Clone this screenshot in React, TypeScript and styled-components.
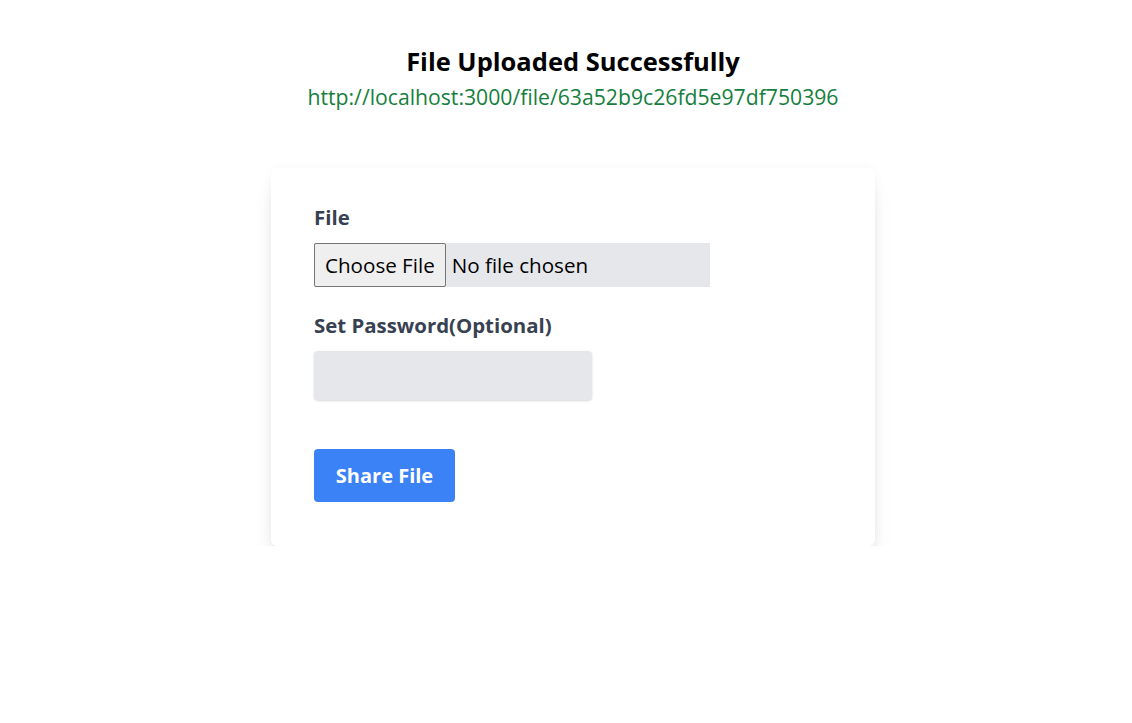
import React from 'react';
import styled, { createGlobalStyle } from 'styled-components';

const GlobalStyle = createGlobalStyle`
  body {
    margin: 0;
    background: #ffffff;
    font-family: "Open Sans", "Noto Sans", sans-serif;
  }
`;

const Page = styled.div`
  display: flex;
  flex-direction: column;
  align-items: center;
  padding: 45px 0 0 14px;
`;

const Title = styled.h2`
  margin: 0;
  font-size: 25.5px;
  line-height: 32px;
  font-weight: 700;
  color: #000000;
`;

const FileLink = styled.p`
  margin: 6px 0 0;
  font-size: 21.2px;
  line-height: 28px;
  color: #15803d;
`;

const Card = styled.form`
  margin-top: 57px;
  width: 604px;
  box-sizing: border-box;
  padding: 35px 43px 44px;
  background: #ffffff;
  border-radius: 6px;
  box-shadow: 0 20px 25px -5px rgba(0, 0, 0, 0.1), 0 8px 10px -6px rgba(0, 0, 0, 0.1),
    0 0 12px rgba(0, 0, 0, 0.04);
`;

const Field = styled.div<{ $gap?: number }>`
  display: flex;
  flex-direction: column;
  align-items: flex-start;
  margin-bottom: ${(p) => p.$gap ?? 24}px;
`;

const Label = styled.label`
  font-size: 20.4px;
  line-height: 28px;
  font-weight: 700;
  color: #374151;
  margin-bottom: 12px;
`;

const FileInput = styled.input`
  width: 396px;
  height: 44px;
  box-sizing: border-box;
  background: #e5e7eb;
  font-family: inherit;
  font-size: 20.6px;
  color: #000000;

  &::file-selector-button {
    height: 44px;
    margin-right: 6px;
    padding: 0 10px;
    font-family: inherit;
    font-size: 20.6px;
    background: #efefef;
    border: 1px solid #767676;
    border-radius: 2px;
    color: #000000;
  }
`;

const PasswordInput = styled.input`
  width: 278px;
  height: 49px;
  box-sizing: border-box;
  border: none;
  border-radius: 4px;
  background: #e5e7eb;
  box-shadow: 0 1px 3px rgba(0, 0, 0, 0.1), 0 1px 2px rgba(0, 0, 0, 0.06);
  padding: 0 12px;
  font-size: 18px;
  outline: none;
`;

const ShareButton = styled.button`
  width: 141px;
  height: 53px;
  border: none;
  border-radius: 4px;
  background: #3b82f6;
  color: #ffffff;
  font-family: inherit;
  font-size: 20px;
  font-weight: 700;
  cursor: pointer;
`;

const App: React.FC = () => {
  return (
    <>
      <GlobalStyle />
      <Page>
        <Title>File Uploaded Successfully</Title>
        <FileLink>http://localhost:3000/file/63a52b9c26fd5e97df750396</FileLink>
        <Card onSubmit={(e) => e.preventDefault()}>
          <Field>
            <Label htmlFor="file">File</Label>
            <FileInput id="file" type="file" />
          </Field>
          <Field $gap={49}>
            <Label htmlFor="password">Set Password(Optional)</Label>
            <PasswordInput id="password" type="password" />
          </Field>
          <ShareButton type="submit">Share File</ShareButton>
        </Card>
      </Page>
    </>
  );
};

export default App;
